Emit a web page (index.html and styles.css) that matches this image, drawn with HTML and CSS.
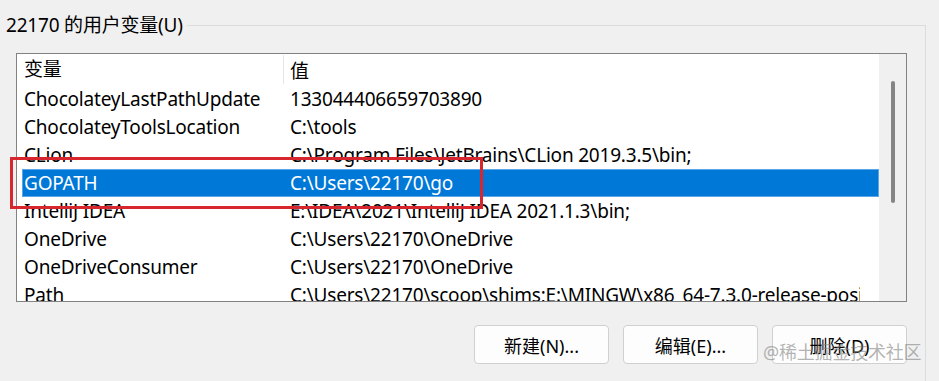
FILE: index.html
```html
<!DOCTYPE html>
<html lang="zh-CN">
<head>
    <meta charset="UTF-8">
    <title>用户变量</title>
    <link rel="stylesheet" href="styles.css">
</head>
<body>
    <fieldset class="group">
        <legend>22170 的用户变量(U)</legend>
        <div class="list">
            <div class="rows">
                <div class="head">
                    <div class="name">变量</div>
                    <div class="value">值</div>
                </div>
                <div class="row"><div class="name">ChocolateyLastPathUpdate</div><div class="value">133044406659703890</div></div>
                <div class="row"><div class="name">ChocolateyToolsLocation</div><div class="value">C:\tools</div></div>
                <div class="row"><div class="name">CLion</div><div class="value">C:\Program Files\JetBrains\CLion 2019.3.5\bin;</div></div>
                <div class="row selected"><div class="name">GOPATH</div><div class="value">C:\Users\22170\go</div></div>
                <div class="row"><div class="name">IntelliJ IDEA</div><div class="value">E:\IDEA\2021\IntelliJ IDEA 2021.1.3\bin;</div></div>
                <div class="row"><div class="name">OneDrive</div><div class="value">C:\Users\22170\OneDrive</div></div>
                <div class="row"><div class="name">OneDriveConsumer</div><div class="value">C:\Users\22170\OneDrive</div></div>
                <div class="row"><div class="name">Path</div><div class="value">C:\Users\22170\scoop\shims;E:\MINGW\x86_64-7.3.0-release-posix-seh-rt_v5-rev0\mingw64\bin;</div></div>
            </div>
            <div class="scrollbar"><div class="thumb"></div></div>
        </div>
        <div class="buttons">
            <button>新建(N)...</button>
            <button>编辑(E)...</button>
            <button>删除(D)</button>
        </div>
    </fieldset>
    <div class="mark"></div>
    <div class="watermark">@稀土掘金技术社区</div>
</body>
</html>
```

FILE: styles.css
```css
html {
    overflow: hidden;
}
body {
    margin: 0;
    background-color: #f0f0f0;
    font-family: "Noto Sans", "Noto Sans CJK SC", sans-serif;
    font-size: 19px;
    letter-spacing: -0.2px;
    color: #000;
    height: 381px;
    overflow: hidden;
}
.group {
    box-sizing: border-box;
    width: 926px;
    height: 368px;
    margin: 13px 0 0 0;
    padding: 16px 0 0 16px;
    border: 1px solid #dcdcdc;
    border-left: none;
    border-bottom: none;
}
legend {
    padding: 0 4px 0 6px;
    margin-left: -16px;
    line-height: 24px;
}
.list {
    box-sizing: border-box;
    width: 891px;
    height: 249px;
    border: 1px solid #828282;
    background-color: #fff;
    display: flex;
}
.rows {
    flex: 1;
    overflow: hidden;
}
.head {
    display: flex;
    height: 31px;
    align-items: center;
}
.head .name {
    width: 259px;
    padding-left: 7px;
    height: 29px;
    line-height: 29px;
    border-right: 1px solid #e5e5e5;
}
.head .value {
    padding-left: 6px;
}
.row {
    display: flex;
    height: 28px;
    line-height: 28px;
    margin-left: 5px;
    white-space: nowrap;
}
.row .name {
    width: 259px;
    padding-left: 2px;
    flex: none;
}
.row .value {
    flex: 1;
    padding-left: 7px;
    margin-right: 19px;
    overflow: hidden;
}
.selected {
    background-color: #0078d7;
    color: #fff;
    box-shadow: inset 0 0 0 1px #5aa6e6;
}
.scrollbar {
    width: 27px;
    background-color: #f0f0f0;
}
.thumb {
    width: 4px;
    height: 122px;
    margin: 27px 0 0 12px;
    border-radius: 2px;
    background-color: #858585;
}
.buttons {
    display: flex;
    justify-content: flex-end;
    gap: 14px;
    width: 891px;
    margin-top: 23px;
}
button {
    box-sizing: border-box;
    width: 135px;
    height: 39px;
    font-family: inherit;
    font-size: 18px;
    color: #000;
    background-color: #fdfdfd;
    border: 1px solid #d0d0d0;
    border-radius: 4px;
}
.mark {
    position: absolute;
    left: 10px;
    top: 157px;
    width: 473px;
    height: 52px;
    box-sizing: border-box;
    border: 3px solid #d7262e;
}
.watermark {
    position: absolute;
    left: 763px;
    top: 340px;
    font-size: 18px;
    line-height: 24px;
    color: rgba(130, 130, 130, 0.6);
}
```
